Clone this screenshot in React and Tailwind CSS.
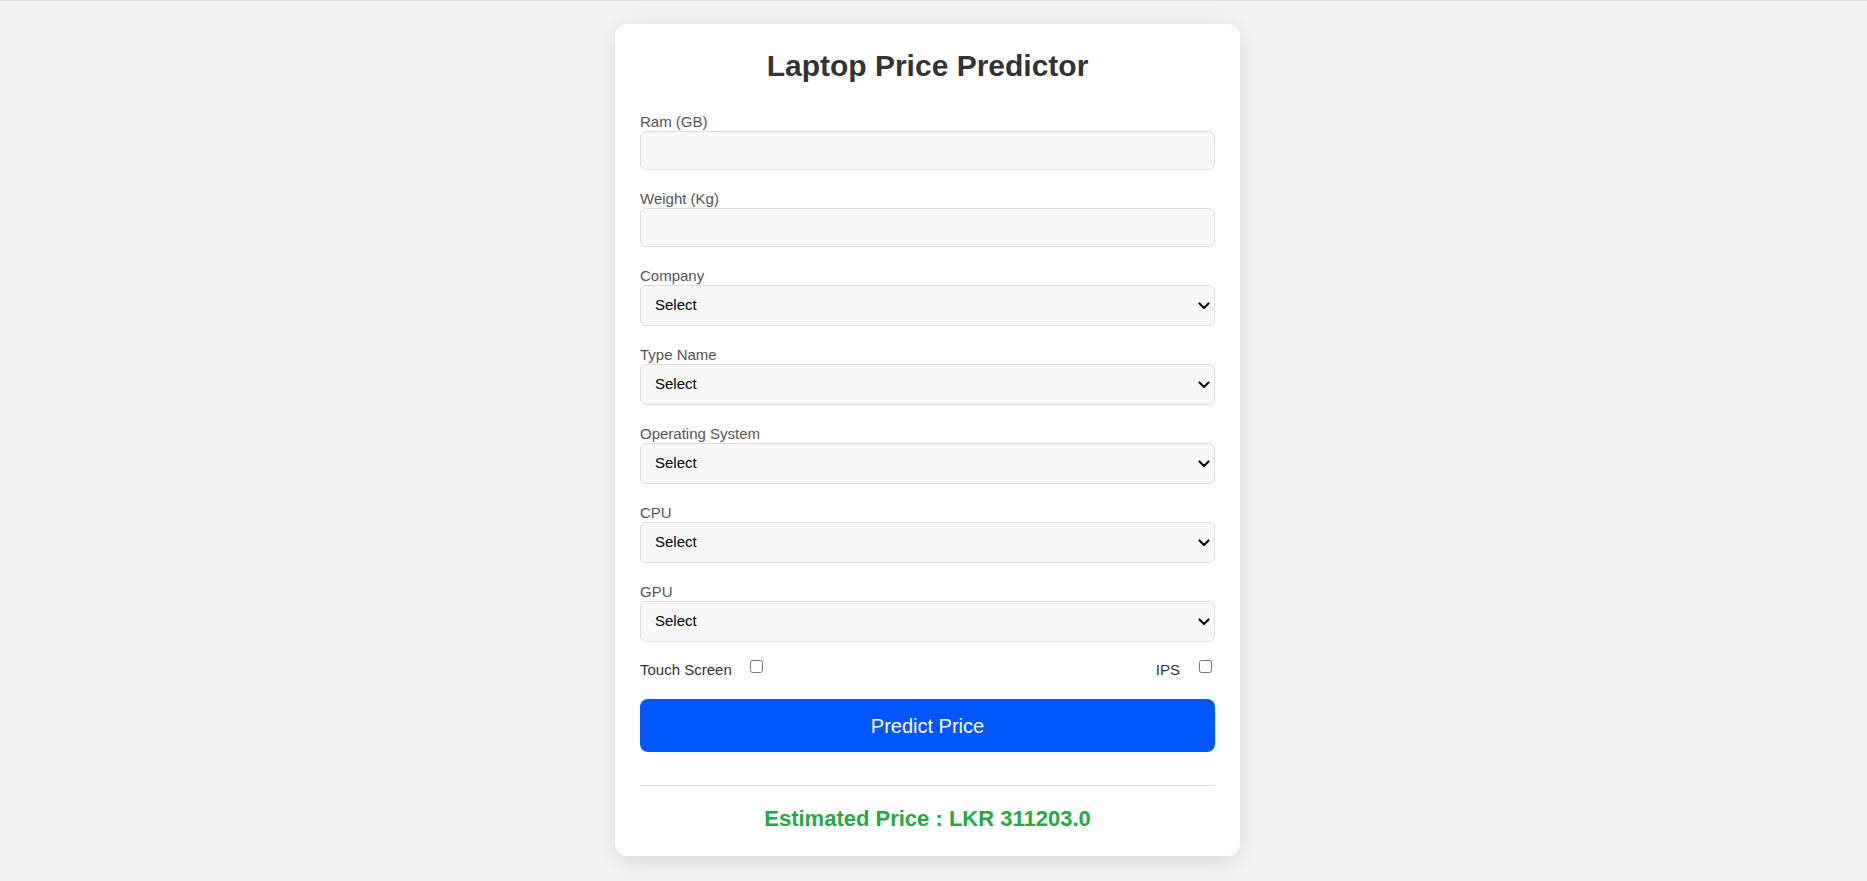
// Laptop price predictor form

import { useState } from 'react';

const SELECT_FIELDS = [
  { id: 'company', label: 'Company' },
  { id: 'typename', label: 'Type Name' },
  { id: 'os', label: 'Operating System' },
  { id: 'cpu', label: 'CPU' },
  { id: 'gpu', label: 'GPU' },
];

function TextField({ label, value, onChange }) {
  return (
    <div>
      <label className="block text-[15px] leading-[18px] text-[#555]">{label}</label>
      <input
        type="text"
        value={value}
        onChange={(e) => onChange(e.target.value)}
        className="block w-full h-[39px] px-[10px] bg-[#f9f9f9] border border-[#dddddd] rounded-[6px] text-[15px] text-black outline-none"
      />
    </div>
  );
}

function SelectField({ label, value, onChange }) {
  return (
    <div>
      <label className="block text-[15px] leading-[18px] text-[#555]">{label}</label>
      <div className="relative">
        <select
          value={value}
          onChange={(e) => onChange(e.target.value)}
          className="block w-full h-[41px] pl-[14px] pr-[30px] appearance-none bg-[#f9f9f9] border border-[#dddddd] rounded-[6px] text-[15px] text-black outline-none"
        >
          <option value="">Select</option>
        </select>
        {/* chevron */}
        <svg
          width="12"
          height="8"
          viewBox="0 0 12 8"
          className="absolute right-[5px] top-1/2 -translate-y-1/2 pointer-events-none"
        >
          <path d="M1.5 1.5 L6 6 L10.5 1.5" fill="none" stroke="#111" strokeWidth="2.2" strokeLinecap="round" strokeLinejoin="round" />
        </svg>
      </div>
    </div>
  );
}

export default function App() {
  const [ram, setRam] = useState('');
  const [weight, setWeight] = useState('');
  const [selects, setSelects] = useState({});
  const [touch, setTouch] = useState(false);
  const [ips, setIps] = useState(false);

  return (
    <div className="min-h-screen bg-[#f4f4f4] border-t border-[#dcdcdc] font-['Liberation_Sans',Arial,sans-serif]">
      <div className="flex justify-center pt-[23px] pb-[24px] pr-[12px]">
        <div className="w-[625px] bg-white rounded-[12px] shadow-[0_5px_25px_rgba(0,0,0,0.12)] p-[25px]">
          <h1 className="text-center text-[30px] leading-[34px] font-bold text-[#333] mb-[30px]">
            Laptop Price Predictor
          </h1>

          {/* Fields */}
          <div className="flex flex-col gap-[20px]">
            <TextField label="Ram (GB)" value={ram} onChange={setRam} />
            <TextField label="Weight (Kg)" value={weight} onChange={setWeight} />
            {SELECT_FIELDS.map((f) => (
              <SelectField
                key={f.id}
                label={f.label}
                value={selects[f.id] || ''}
                onChange={(v) => setSelects({ ...selects, [f.id]: v })}
              />
            ))}
          </div>

          {/* Checkboxes */}
          <div className="flex justify-between mt-[17px] text-[15px] text-[#333]">
            <div className="flex items-start">
              <span className="leading-[18px] mt-[2px]">Touch Screen</span>
              <input
                type="checkbox"
                checked={touch}
                onChange={(e) => setTouch(e.target.checked)}
                className="ml-[18px] mt-[1px] w-[13px] h-[13px]"
              />
            </div>
            <div className="flex items-start">
              <span className="leading-[18px] mt-[2px]">IPS</span>
              <input
                type="checkbox"
                checked={ips}
                onChange={(e) => setIps(e.target.checked)}
                className="ml-[19px] mr-[3px] mt-[1px] w-[13px] h-[13px]"
              />
            </div>
          </div>

          <button className="block w-full h-[53px] mt-[20px] bg-[#0057ff] text-white text-[20px] rounded-[8px]">
            Predict Price
          </button>

          {/* Result */}
          <div className="mt-[33px] border-t border-[#dddddd] pt-[20px] text-center">
            <p className="text-[22px] leading-[25px] font-bold text-[#28a745]">
              Estimated Price : LKR 311203.0
            </p>
          </div>
        </div>
      </div>
    </div>
  );
}
